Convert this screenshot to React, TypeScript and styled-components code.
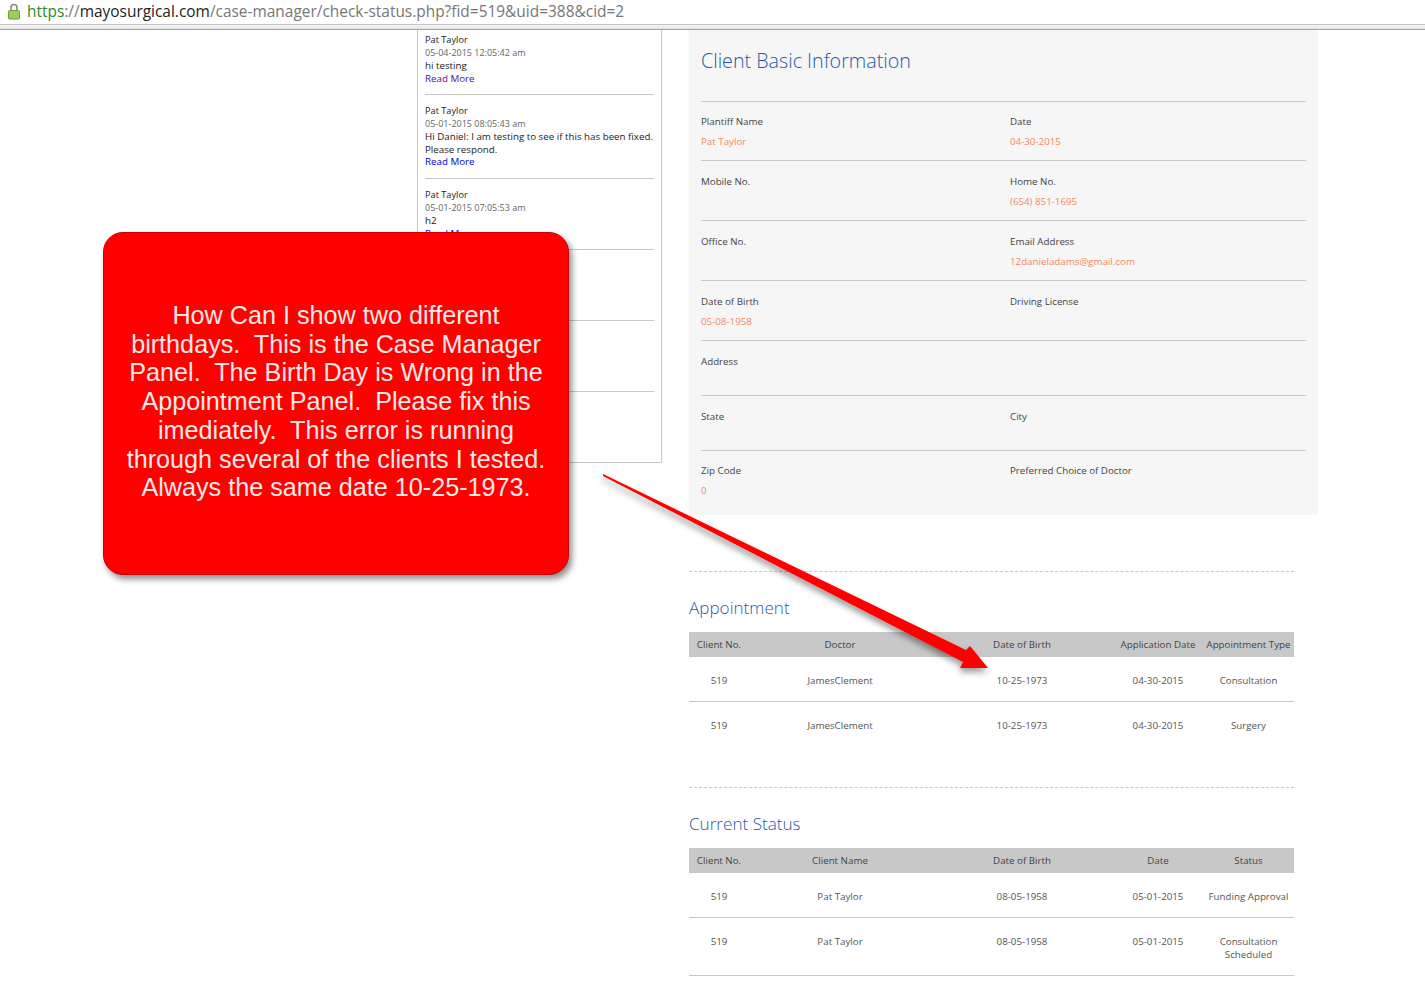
import React from 'react';
import styled, { createGlobalStyle } from 'styled-components';

const GlobalStyle = createGlobalStyle`
    html, body {
        margin: 0;
        padding: 0;
        background: #fff;
        overflow: hidden;
    }
    * {
        box-sizing: border-box;
    }
`;

const Page = styled.div`
    position: relative;
    width: 1425px;
    height: 987px;
    overflow: hidden;
    font-family: "Open Sans", "Liberation Sans", sans-serif;
`;

const AddressBar = styled.div`
    display: flex;
    align-items: center;
    gap: 7px;
    height: 30px;
    padding: 0 0 7px 8px;
    background: linear-gradient(to bottom, #fff 24px, #c4c4c4 24px, #c4c4c4 25px, #f4f4f4 25px, #e6e6e6 29px);
    border-bottom: 1px solid #a0a0a0;
    font-size: 15.45px;
    color: #777;
`;

const Https = styled.span`
    color: #2a8a2a;
`;

const Domain = styled.span`
    color: #222;
`;

const Main = styled.div`
    display: flex;
    align-items: flex-start;
    padding-left: 417px;
`;

const MessagePanel = styled.div`
    width: 245px;
    height: 433px;
    padding: 0 7px;
    border: 1px solid #c8c8c8;
    border-top: none;
    font-size: 9.75px;
    line-height: 12.85px;
    color: #222;
`;

const Message = styled.div<{ $height: number; $first?: boolean }>`
    height: ${({ $height }) => $height}px;
    padding-top: ${({ $first }) => ($first ? 4 : 10)}px;
    border-bottom: 1px solid #c8c8c8;
`;

const MessageName = styled.div`
    font-size: 9.2px;
`;

const MessageDate = styled.div`
    font-size: 9px;
    color: #666;
`;

const ReadMore = styled.a<{ $visited?: boolean }>`
    display: block;
    color: ${({ $visited }) => ($visited ? '#4b0f9e' : '#0000d8')};
`;

const Details = styled.div`
    margin-left: 27px;
    width: 605px;
`;

const ClientPanel = styled.section`
    width: 629px;
    height: 485px;
    padding: 0 12px;
    background: #f6f6f6;
`;

const ClientTitle = styled.h2`
    height: 72px;
    margin: 0;
    padding-top: 17px;
    border-bottom: 1px solid #c8c8c8;
    font-size: 19.7px;
    line-height: 28px;
    font-weight: 300;
    color: #1f5ba8;
`;

const InfoRow = styled.div<{ $height: number; $pad: number; $last?: boolean }>`
    display: grid;
    grid-template-columns: 309px 1fr;
    height: ${({ $height }) => $height}px;
    padding-top: ${({ $pad }) => $pad}px;
    border-bottom: ${({ $last }) => ($last ? 'none' : '1px solid #c8c8c8')};
`;

const InfoLabel = styled.div`
    font-size: 9.75px;
    line-height: 14px;
    color: #444;
`;

const InfoValue = styled.div`
    margin-top: 6px;
    font-size: 9.75px;
    line-height: 14px;
    color: #ee8a5e;
`;

const Section = styled.section<{ $top: number }>`
    margin-top: ${({ $top }) => $top}px;
    border-top: 1px dashed #c8c8c8;
`;

const SectionTitle = styled.h3`
    height: 60px;
    margin: 0;
    padding-top: 24px;
    font-size: 17.1px;
    line-height: 24px;
    font-weight: 300;
    color: #1f5ba8;
`;

const columns = '60px 182px 182px 90px 91px';

const TableHead = styled.div`
    display: grid;
    grid-template-columns: ${columns};
    align-items: center;
    height: 25px;
    background: #c8c8c8;
    font-size: 9.75px;
    color: #444;
    text-align: center;
`;

const HeadCell = styled.div`
    white-space: nowrap;
`;

const TableRow = styled.div<{ $height: number; $rule?: boolean }>`
    display: grid;
    grid-template-columns: ${columns};
    align-items: start;
    height: ${({ $height }) => $height}px;
    padding-top: 17px;
    border-bottom: ${({ $rule }) => ($rule ? '1px solid #c8c8c8' : 'none')};
    font-size: 9.75px;
    line-height: 13px;
    color: #555;
    text-align: center;
`;

const Callout = styled.div`
    position: absolute;
    left: 103px;
    top: 232px;
    width: 466px;
    height: 343px;
    padding-top: 68px;
    border: 1px solid #c80000;
    border-radius: 20px;
    background: #fe0000;
    box-shadow: 3px 4px 6px rgba(0, 0, 0, 0.45);
    font-family: "Liberation Sans", Arial, sans-serif;
    font-size: 25.2px;
    line-height: 28.7px;
    color: #fbe9e9;
    text-align: center;
    white-space: pre-line;
`;

const ArrowLayer = styled.svg`
    position: absolute;
    left: 590px;
    top: 460px;
`;

const calloutText = `How Can I show two different
birthdays.\u00a0 This is the Case Manager
Panel.\u00a0 The Birth Day is Wrong in the
Appointment Panel.\u00a0 Please fix this
imediately.\u00a0 This error is running
through several of the clients I tested.
Always the same date 10-25-1973.`;

const info = [
    { height: 59, pad: 13, left: ['Plantiff Name', 'Pat Taylor'], right: ['Date', '04-30-2015'] },
    { height: 60, pad: 14, left: ['Mobile No.'], right: ['Home No.', '(654) 851-1695'] },
    { height: 60, pad: 14, left: ['Office No.'], right: ['Email Address', '12danieladams@gmail.com'] },
    { height: 60, pad: 14, left: ['Date of Birth', '05-08-1958'], right: ['Driving License'] },
    { height: 55, pad: 14, left: ['Address'], right: [] },
    { height: 55, pad: 14, left: ['State'], right: ['City'] },
    { height: 64, pad: 13, left: ['Zip Code', '0'], right: ['Preferred Choice of Doctor'], last: true },
];

const InfoCell = ({ item }: { item: string[] }) => (
    <div>
        <InfoLabel>{item[0]}</InfoLabel>
        {item[1] && <InfoValue>{item[1]}</InfoValue>}
    </div>
);

export default function App() {
    return (
        <Page>
            <GlobalStyle />
            <AddressBar>
                <svg width="12" height="17" viewBox="0 0 12 17">
                    <path d="M3 8V4.5a3 3 0 0 1 6 0V8" fill="none" stroke="#8a8a7a" strokeWidth="1.6" />
                    <rect x="0.5" y="7.5" width="11" height="8.5" rx="1" fill="#9ccc5a" stroke="#6f9a3a" />
                </svg>
                <span>
                    <Https>https</Https>://<Domain>mayosurgical.com</Domain>/case-manager/check-status.php?fid=519&amp;uid=388&amp;cid=2
                </span>
            </AddressBar>
            <Main>
                <MessagePanel>
                    <Message $height={65} $first>
                        <MessageName>Pat Taylor</MessageName>
                        <MessageDate>05-04-2015 12:05:42 am</MessageDate>
                        hi testing
                        <ReadMore $visited>Read More</ReadMore>
                    </Message>
                    <Message $height={84}>
                        <MessageName>Pat Taylor</MessageName>
                        <MessageDate>05-01-2015 08:05:43 am</MessageDate>
                        Hi Daniel: I am testing to see if this has been fixed. Please respond.
                        <ReadMore>Read More</ReadMore>
                    </Message>
                    <Message $height={71}>
                        <MessageName>Pat Taylor</MessageName>
                        <MessageDate>05-01-2015 07:05:53 am</MessageDate>
                        h2
                        <ReadMore>Read More</ReadMore>
                    </Message>
                    <Message $height={71} />
                    <Message $height={71} />
                </MessagePanel>
                <Details>
                    <ClientPanel>
                        <ClientTitle>Client Basic Information</ClientTitle>
                        {info.map((row) => (
                            <InfoRow key={row.left[0]} $height={row.height} $pad={row.pad} $last={row.last}>
                                <InfoCell item={row.left} />
                                <InfoCell item={row.right} />
                            </InfoRow>
                        ))}
                    </ClientPanel>
                    <Section $top={56}>
                        <SectionTitle>Appointment</SectionTitle>
                        <TableHead>
                            <HeadCell>Client No.</HeadCell>
                            <HeadCell>Doctor</HeadCell>
                            <HeadCell>Date of Birth</HeadCell>
                            <HeadCell>Application Date</HeadCell>
                            <HeadCell>Appointment Type</HeadCell>
                        </TableHead>
                        <TableRow $height={45} $rule>
                            <div>519</div>
                            <div>JamesClement</div>
                            <div>10-25-1973</div>
                            <div>04-30-2015</div>
                            <div>Consultation</div>
                        </TableRow>
                        <TableRow $height={45}>
                            <div>519</div>
                            <div>JamesClement</div>
                            <div>10-25-1973</div>
                            <div>04-30-2015</div>
                            <div>Surgery</div>
                        </TableRow>
                    </Section>
                    <Section $top={40}>
                        <SectionTitle>Current Status</SectionTitle>
                        <TableHead>
                            <HeadCell>Client No.</HeadCell>
                            <HeadCell>Client Name</HeadCell>
                            <HeadCell>Date of Birth</HeadCell>
                            <HeadCell>Date</HeadCell>
                            <HeadCell>Status</HeadCell>
                        </TableHead>
                        <TableRow $height={45} $rule>
                            <div>519</div>
                            <div>Pat Taylor</div>
                            <div>08-05-1958</div>
                            <div>05-01-2015</div>
                            <div>Funding Approval</div>
                        </TableRow>
                        <TableRow $height={58} $rule>
                            <div>519</div>
                            <div>Pat Taylor</div>
                            <div>08-05-1958</div>
                            <div>05-01-2015</div>
                            <div>Consultation Scheduled</div>
                        </TableRow>
                    </Section>
                </Details>
            </Main>
            <Callout>{calloutText}</Callout>
            <ArrowLayer width="410" height="220" viewBox="590 460 410 220">
                <defs>
                    <filter id="arrowShadow" x="-5%" y="-5%" width="115%" height="115%">
                        <feDropShadow dx="-1" dy="4" stdDeviation="3" floodColor="#000" floodOpacity="0.4" />
                    </filter>
                </defs>
                <polygon points="603,474 966,650 970,646 988,668 960,668 963,662 603,476" fill="#fe0000" filter="url(#arrowShadow)" />
            </ArrowLayer>
        </Page>
    );
}
